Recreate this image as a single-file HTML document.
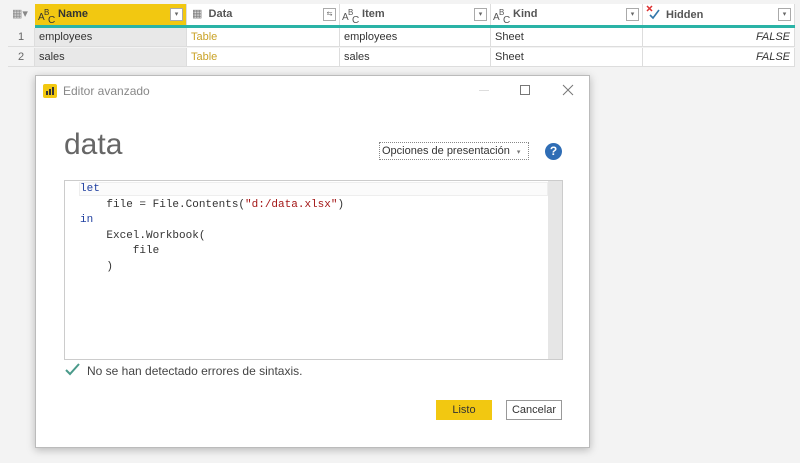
<!DOCTYPE html>
<html><head><meta charset="utf-8"><style>
*{box-sizing:border-box;margin:0;padding:0}
body{width:800px;height:463px;background:#f3f3f3;font-family:"Liberation Sans",sans-serif;position:relative;overflow:hidden;font-size:11px;color:#333}
.a{position:absolute}
.hdr{top:4px;height:21px;background:#fff;border-right:1px solid #ddd;font-weight:bold;color:#555;font-size:11px;line-height:21px}
.dd{position:absolute;right:3px;top:4px;width:13px;height:13px;border:1px solid #aaa;background:#fff;font-size:7px;line-height:11px;text-align:center;color:#666;font-weight:normal}
.cell{height:19px;line-height:19px;background:#fff;border-right:1px solid #ddd;border-bottom:1px solid #ddd;padding-left:4px;font-size:11px;color:#333}
.abc{display:inline-block;position:relative;width:17px;height:21px;vertical-align:top;font-weight:normal;color:#555}
.abc i{position:absolute;font-style:normal}
pre{font-family:"Liberation Mono",monospace}
</style></head><body>
<div class="a hdr" style="left:8px;width:27px;background:#f3f3f3;border:none;color:#888;font-weight:normal;padding-left:4px">▦▾</div>
<div class="a hdr" style="left:35px;width:152px;background:#f2c811;color:#333;padding-left:3px"><span class="abc" style="color:#333"><i style="left:0;top:3px;font-size:10px">A</i><i style="left:6px;top:-2px;font-size:8px">B</i><i style="left:10px;top:6px;font-size:10px">C</i></span> Name<div class="dd">▾</div></div>
<div class="a hdr" style="left:187px;width:153px;padding-left:5px"><span style="color:#777;font-weight:normal">▦</span>&nbsp; Data<div class="dd">⇆</div></div>
<div class="a hdr" style="left:340px;width:151px;padding-left:2px"><span class="abc"><i style="left:0;top:3px;font-size:10px">A</i><i style="left:6px;top:-2px;font-size:8px">B</i><i style="left:10px;top:6px;font-size:10px">C</i></span> Item<div class="dd">▾</div></div>
<div class="a hdr" style="left:491px;width:152px;padding-left:2px"><span class="abc"><i style="left:0;top:3px;font-size:10px">A</i><i style="left:6px;top:-2px;font-size:8px">B</i><i style="left:10px;top:6px;font-size:10px">C</i></span> Kind<div class="dd">▾</div></div>
<div class="a hdr" style="left:643px;width:152px;padding-left:2px"><svg width="18" height="18" style="vertical-align:-4px"><path d="M2 2l5 5M7 2l-5 5" stroke="#d33" stroke-width="1.5"/><path d="M5 11l3 3 6-8" stroke="#37a" stroke-width="1.6" fill="none"/></svg> Hidden<div class="dd">▾</div></div>
<div class="a" style="left:35px;top:25px;width:760px;height:3px;background:#2ab3a6"></div>
<div class="a cell" style="left:8px;top:28px;width:27px;background:#f3f3f3;text-align:center;padding:0;color:#666">1</div>
<div class="a cell" style="left:8px;top:48px;width:27px;background:#f3f3f3;text-align:center;padding:0;color:#666">2</div>
<div class="a cell" style="left:35px;top:28px;width:152px;background:#e8e8e8">employees</div>
<div class="a cell" style="left:35px;top:48px;width:152px;background:#e8e8e8">sales</div>
<div class="a cell" style="left:187px;top:28px;width:153px;color:#c9a227">Table</div>
<div class="a cell" style="left:187px;top:48px;width:153px;color:#c9a227">Table</div>
<div class="a cell" style="left:340px;top:28px;width:151px">employees</div>
<div class="a cell" style="left:340px;top:48px;width:151px">sales</div>
<div class="a cell" style="left:491px;top:28px;width:152px">Sheet</div>
<div class="a cell" style="left:491px;top:48px;width:152px">Sheet</div>
<div class="a cell" style="left:643px;top:28px;width:152px;text-align:right;padding-right:4px;font-style:italic">FALSE</div>
<div class="a cell" style="left:643px;top:48px;width:152px;text-align:right;padding-right:4px;font-style:italic">FALSE</div>
<div class="a" style="left:35px;top:75px;width:555px;height:373px;background:#fff;border:1px solid #bbb;box-shadow:0 2px 8px rgba(0,0,0,.25)">
 <div class="a" style="left:7px;top:8px;width:14px;height:14px;background:#f2c811;border-radius:2px"><svg width="14" height="14"><rect x="3" y="7" width="2" height="4" fill="#333"/><rect x="6" y="5" width="2" height="6" fill="#333"/><rect x="9" y="3" width="2" height="8" fill="#333"/></svg></div>
 <div class="a" style="left:27px;top:8px;font-size:12px;color:#888">Editor avanzado</div>
 <div class="a" style="left:443px;top:14px;width:10px;border-top:1px solid #ddd"></div>
 <div class="a" style="left:484px;top:9px;width:10px;height:10px;border:1px solid #777"></div>
 <svg class="a" style="left:526px;top:8px" width="12" height="12"><path d="M1 1l10 10M11 1L1 11" stroke="#777" stroke-width="1"/></svg>
 <div class="a" style="left:28px;top:52px;font-size:30px;color:#666">data</div>
 <div class="a" style="left:343px;top:66px;width:150px;height:18px;border:1px dotted #888;font-size:11px;line-height:16px;padding-left:2px;color:#333">Opciones de presentación <span style="font-size:7px;color:#777;margin-left:4px">▾</span></div>
 <div class="a" style="left:509px;top:67px;width:17px;height:17px;border-radius:50%;background:#2f6db5;color:#fff;font-weight:bold;font-size:12px;text-align:center;line-height:17px">?</div>
 <div class="a" style="left:28px;top:104px;width:499px;height:180px;border:1px solid #ccc">
  <div class="a" style="left:14px;top:1px;width:469px;height:14px;border:1px solid #eee;background:#fbfbfb"></div>
  <div class="a" style="right:0;top:0;width:14px;height:178px;background:#e6e6e6"></div>
  <pre class="a" style="left:15px;top:1px;font-size:11px;line-height:15.6px;color:#333"><span style="color:#1f3fa0">let</span>
    file = File.Contents(<span style="color:#a31515">"d:/data.xlsx"</span>)
<span style="color:#1f3fa0">in</span>
    Excel.Workbook(
        file
    )</pre>
 </div>
 <svg class="a" style="left:29px;top:287px" width="15" height="13"><path d="M1 7l4 4 9-10" stroke="#4a9a8a" stroke-width="2" fill="none"/></svg>
 <div class="a" style="left:51px;top:288px;font-size:12px;color:#444">No se han detectado errores de sintaxis.</div>
 <div class="a" style="left:400px;top:324px;width:56px;height:20px;background:#f2c811;text-align:center;line-height:20px;font-size:11px;color:#333">Listo</div>
 <div class="a" style="left:470px;top:324px;width:56px;height:20px;border:1px solid #999;text-align:center;line-height:18px;font-size:11px;color:#333">Cancelar</div>
</div>
</body></html>
